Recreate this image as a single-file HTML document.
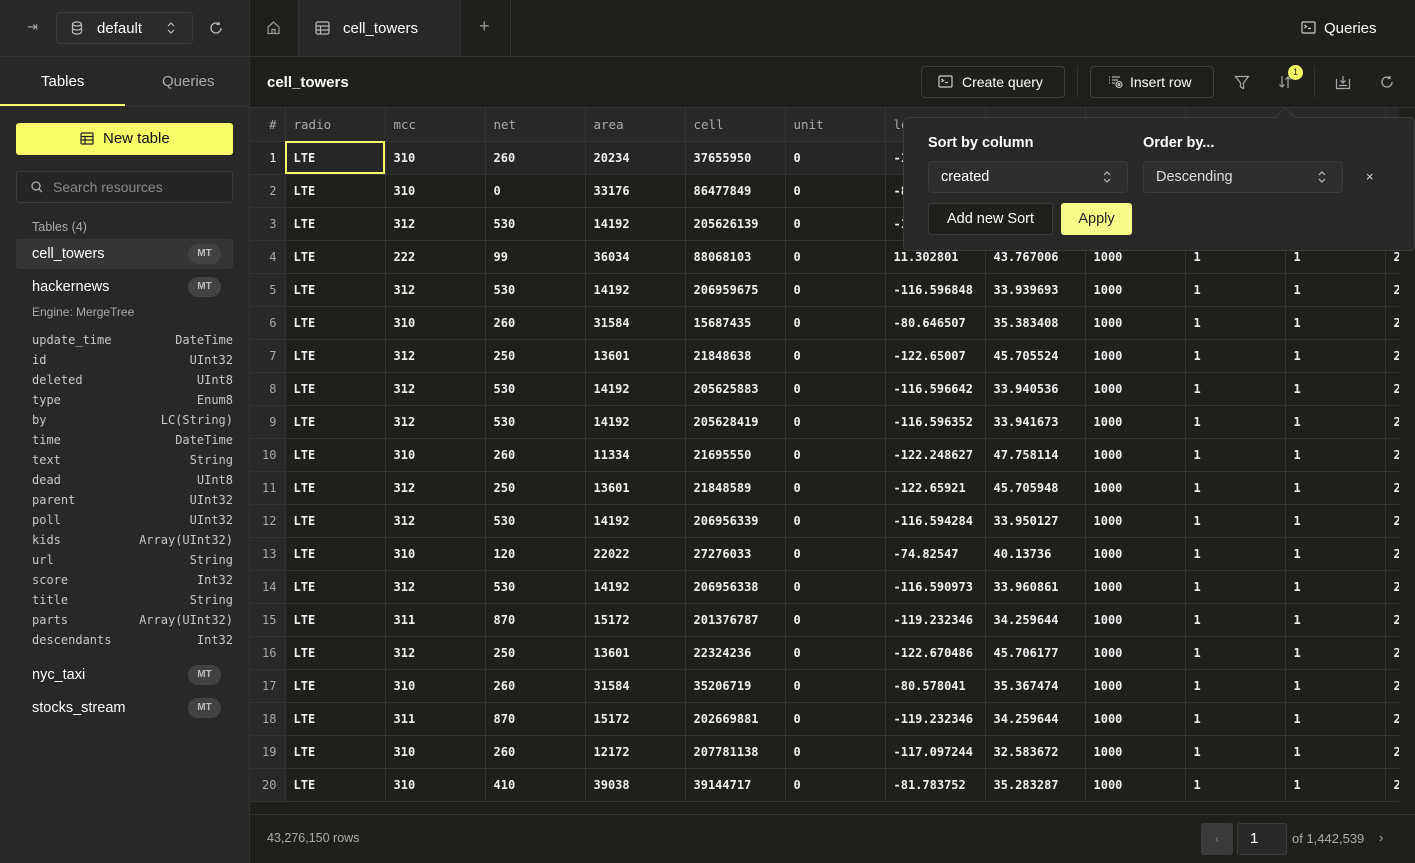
<!DOCTYPE html>
<html><head><meta charset="utf-8"><style>
*{box-sizing:border-box;margin:0;padding:0}
body{width:1415px;height:863px;overflow:hidden;background:#1f1f1c;font-family:"Liberation Sans",sans-serif;color:#fff;position:relative}
.abs{position:absolute}
.sb{left:0;top:0;width:250px;height:863px;background:#282828;border-right:1px solid #333}
.mono{font-family:"DejaVu Sans Mono","Liberation Mono",monospace}
.badge{position:absolute;left:188px;width:33px;height:20px;border-radius:10px;background:#424242;color:#bbb;font-size:10px;text-align:center;line-height:20px;font-weight:bold}
.col{position:absolute;left:32px;width:201px;font-size:12px;color:#c8c8c8;height:20px}
.col span{position:absolute;right:0}
table{position:absolute;left:250px;top:108px;border-collapse:collapse;table-layout:fixed;font-family:"DejaVu Sans Mono",monospace;font-size:12px}
td,th{height:33px;border-right:1px solid #333;border-bottom:1px solid #333;padding-left:8px;text-align:left;white-space:nowrap;overflow:hidden;font-weight:bold;color:#f0f0f0}
th{background:#282828;color:#aaa;font-weight:normal;font-size:12.5px}
td.n{background:#282828;color:#aaa;text-align:right;padding:0 8px 0 0;font-weight:normal;font-size:12px}
tr.s td{background:#262626}
.btn{position:absolute;height:32px;border:1px solid #3e3e3e;border-radius:4px;font-size:14px;line-height:30px;color:#fff}
svg{position:absolute}
</style></head><body>
<div class="abs sb"></div>
<!-- top bar -->
<div class="abs" style="left:0;top:56px;width:1415px;height:1px;background:#333"></div>
<div class="abs" style="left:27px;top:19px;color:#aaa;font-size:13px">⇥</div>
<div class="abs" style="left:56px;top:12px;width:137px;height:32px;border:1px solid #3a3a3a;border-radius:4px;background:#2a2a2a"></div>
<svg style="left:71px;top:21px" width="12" height="14" viewBox="0 0 12 14" fill="none" stroke="#bbb" stroke-width="1.2"><ellipse cx="6" cy="3" rx="4.5" ry="2"/><path d="M1.5 3v8c0 1.1 2 2 4.5 2s4.5-.9 4.5-2V3M1.5 7c0 1.1 2 2 4.5 2s4.5-.9 4.5-2"/></svg>
<div class="abs" style="left:97px;top:20px;font-size:15px">default</div>
<svg style="left:167px;top:21px" width="8" height="14" viewBox="0 0 8 14" fill="none" stroke="#bbb" stroke-width="1.2"><path d="M1 5l3-3 3 3M1 9l3 3 3-3"/></svg>
<svg style="left:209px;top:21px" width="14" height="14" viewBox="0 0 14 14" fill="none" stroke="#bbb" stroke-width="1.3"><path d="M12 7a5 5 0 1 1-2-4M10 1v2.5h-2.5"/></svg>
<div class="abs" style="left:250px;top:0;width:48px;height:56px;background:#1f1f1c"></div>
<svg style="left:266px;top:20px" width="15" height="15" viewBox="0 0 15 15" fill="none" stroke="#999" stroke-width="1.2"><path d="M2 7L7.5 2 13 7v6.5H2z M6 13.5v-4h3v4"/></svg>
<div class="abs" style="left:298px;top:0;width:163px;height:56px;background:#282828;border-left:1px solid #333;border-right:1px solid #333"></div>
<svg style="left:315px;top:21px" width="15" height="14" viewBox="0 0 15 14" fill="none" stroke="#bbb" stroke-width="1.2"><rect x="1" y="1" width="13" height="12" rx="1.5"/><path d="M1 5h13M1 9h13M5.5 5v8"/></svg>
<div class="abs" style="left:343px;top:20px;font-size:15px">cell_towers</div>
<div class="abs" style="left:479px;top:16px;font-size:18px;color:#999">+</div>
<div class="abs" style="left:510px;top:0;width:1px;height:56px;background:#333"></div>
<svg style="left:1301px;top:21px" width="15" height="13" viewBox="0 0 15 13" fill="none" stroke="#ccc" stroke-width="1.2"><rect x="1" y="1" width="13" height="11" rx="1"/><path d="M3.5 4l2 1.5-2 1.5M7 7.5h3"/></svg>
<div class="abs" style="left:1324px;top:20px;font-size:15px">Queries</div>

<!-- sidebar -->
<div class="abs" style="left:41px;top:73px;font-size:15px">Tables</div>
<div class="abs" style="left:162px;top:73px;font-size:15px;color:#aaa">Queries</div>
<div class="abs" style="left:0;top:106px;width:250px;height:1px;background:#333"></div>
<div class="abs" style="left:0;top:104px;width:125px;height:2px;background:#f5fb66"></div>
<div class="abs" style="left:16px;top:123px;width:217px;height:32px;background:#f7fc68;border-radius:3px;color:#111;font-size:15px;line-height:32px;padding-left:87px">New table</div>
<svg style="left:80px;top:132px" width="14" height="13" viewBox="0 0 14 13" fill="none" stroke="#222" stroke-width="1.2"><rect x="1" y="1" width="12" height="11" rx="1"/><path d="M1 4.5h12M1 8h12M5 4.5v7.5"/></svg>
<div class="abs" style="left:16px;top:171px;width:217px;height:32px;border:1px solid #3a3a3a;border-radius:3px;background:#252525"></div>
<svg style="left:31px;top:181px" width="12" height="12" viewBox="0 0 12 12" fill="none" stroke="#aaa" stroke-width="1.3"><circle cx="5" cy="5" r="4"/><path d="M8 8l3 3"/></svg>
<div class="abs" style="left:53px;top:179px;font-size:14px;color:#888">Search resources</div>
<div class="abs" style="left:32px;top:220px;font-size:12.5px;color:#aaa">Tables (4)</div>
<div class="abs" style="left:16px;top:239px;width:217px;height:30px;background:#353535;border-radius:3px"></div>
<div class="abs" style="left:32px;top:246px;font-size:14.5px">cell_towers</div><div class="badge" style="top:244px">MT</div>
<div class="abs" style="left:32px;top:279px;font-size:14.5px">hackernews</div><div class="badge" style="top:277px">MT</div>
<div class="abs" style="left:32px;top:305px;font-size:12px;color:#aaa">Engine: MergeTree</div>
<div class="mono">
<div class="col" style="top:333px">update_time<span>DateTime</span></div>
<div class="col" style="top:353px">id<span>UInt32</span></div>
<div class="col" style="top:373px">deleted<span>UInt8</span></div>
<div class="col" style="top:393px">type<span>Enum8</span></div>
<div class="col" style="top:413px">by<span>LC(String)</span></div>
<div class="col" style="top:433px">time<span>DateTime</span></div>
<div class="col" style="top:453px">text<span>String</span></div>
<div class="col" style="top:473px">dead<span>UInt8</span></div>
<div class="col" style="top:493px">parent<span>UInt32</span></div>
<div class="col" style="top:513px">poll<span>UInt32</span></div>
<div class="col" style="top:533px">kids<span>Array(UInt32)</span></div>
<div class="col" style="top:553px">url<span>String</span></div>
<div class="col" style="top:573px">score<span>Int32</span></div>
<div class="col" style="top:593px">title<span>String</span></div>
<div class="col" style="top:613px">parts<span>Array(UInt32)</span></div>
<div class="col" style="top:633px">descendants<span>Int32</span></div>
</div>
<div class="abs" style="left:32px;top:667px;font-size:14.5px">nyc_taxi</div><div class="badge" style="top:665px">MT</div>
<div class="abs" style="left:32px;top:700px;font-size:14.5px">stocks_stream</div><div class="badge" style="top:698px">MT</div>

<!-- toolbar -->
<div class="abs" style="left:267px;top:74px;font-size:15px;font-weight:bold">cell_towers</div>
<div class="btn" style="left:921px;top:66px;width:144px;padding-left:40px">Create query</div>
<svg style="left:938px;top:75px" width="15" height="13" viewBox="0 0 15 13" fill="none" stroke="#ccc" stroke-width="1.2"><rect x="1" y="1" width="13" height="11" rx="1"/><path d="M3.5 4l2 1.5-2 1.5M7 7.5h3"/></svg>
<div class="abs" style="left:1077px;top:66px;width:1px;height:32px;background:#333"></div>
<div class="btn" style="left:1090px;top:66px;width:124px;padding-left:39px">Insert row</div>
<svg style="left:1108px;top:75px" width="16" height="14" viewBox="0 0 16 14" fill="none" stroke="#ccc" stroke-width="1.1"><path d="M1 2h1M4 2h8M1 5h1M4 5h6M1 8h1M4 8h3"/><circle cx="11" cy="9.5" r="3"/><circle cx="11" cy="9.5" r="1"/></svg>
<svg style="left:1234px;top:75px" width="16" height="15" viewBox="0 0 16 15" fill="none" stroke="#aaa" stroke-width="1.2"><path d="M1.5 1.5h13L9.5 8v5.5l-3-1.5V8z"/></svg>
<svg style="left:1278px;top:74px" width="16" height="16" viewBox="0 0 16 16" fill="none" stroke="#aaa" stroke-width="1.2"><path d="M4 2v11M1.5 10.5L4 13l2.5-2.5M10 14V3M7.5 5.5L10 3l2.5 2.5"/></svg>
<div class="abs" style="left:1288px;top:65px;width:15px;height:15px;border-radius:50%;background:#f5fb66;color:#222;font-size:9px;text-align:center;line-height:15px">1</div>
<div class="abs" style="left:1314px;top:66px;width:1px;height:32px;background:#333"></div>
<svg style="left:1335px;top:74px" width="16" height="16" viewBox="0 0 16 16" fill="none" stroke="#aaa" stroke-width="1.2"><path d="M1.5 5v9.5h13V5M8 2v7M5.5 6.5L8 9l2.5-2.5M4 11.5h8"/></svg>
<svg style="left:1380px;top:75px" width="14" height="14" viewBox="0 0 14 14" fill="none" stroke="#aaa" stroke-width="1.3"><path d="M12 7a5 5 0 1 1-2-4M10 1v2.5h-2.5"/></svg>
<div class="abs" style="left:250px;top:107px;width:1165px;height:1px;background:#333"></div>

<table>
<colgroup><col style="width:35px"><col style="width:100px"><col style="width:100px"><col style="width:100px"><col style="width:100px"><col style="width:100px"><col style="width:100px"><col style="width:100px"><col style="width:100px"><col style="width:100px"><col style="width:100px"><col style="width:100px"><col style="width:14px"></colgroup>
<tr><th style="text-align:right;padding:0 8px 0 0">#</th><th>radio</th><th>mcc</th><th>net</th><th>area</th><th>cell</th><th>unit</th><th>lon</th><th>lat</th><th>range</th><th>samples</th><th>changeable</th><th>c</th></tr>
<tr class="s"><td class="n" style="color:#fff">1</td><td style="outline:2px solid #f5fb66;outline-offset:-2px">LTE</td><td>310</td><td>260</td><td>20234</td><td>37655950</td><td>0</td><td>-122.39</td><td>37.79</td><td>1000</td><td>1</td><td>1</td><td>2</td></tr>
<tr><td class="n">2</td><td>LTE</td><td>310</td><td>0</td><td>33176</td><td>86477849</td><td>0</td><td>-81.56</td><td>28.52</td><td>1000</td><td>1</td><td>1</td><td>2</td></tr>
<tr><td class="n">3</td><td>LTE</td><td>312</td><td>530</td><td>14192</td><td>205626139</td><td>0</td><td>-116.59</td><td>33.94</td><td>1000</td><td>1</td><td>1</td><td>2</td></tr>
<tr><td class="n">4</td><td>LTE</td><td>222</td><td>99</td><td>36034</td><td>88068103</td><td>0</td><td>11.302801</td><td>43.767006</td><td>1000</td><td>1</td><td>1</td><td>2</td></tr>
<tr><td class="n">5</td><td>LTE</td><td>312</td><td>530</td><td>14192</td><td>206959675</td><td>0</td><td>-116.596848</td><td>33.939693</td><td>1000</td><td>1</td><td>1</td><td>2</td></tr>
<tr><td class="n">6</td><td>LTE</td><td>310</td><td>260</td><td>31584</td><td>15687435</td><td>0</td><td>-80.646507</td><td>35.383408</td><td>1000</td><td>1</td><td>1</td><td>2</td></tr>
<tr><td class="n">7</td><td>LTE</td><td>312</td><td>250</td><td>13601</td><td>21848638</td><td>0</td><td>-122.65007</td><td>45.705524</td><td>1000</td><td>1</td><td>1</td><td>2</td></tr>
<tr><td class="n">8</td><td>LTE</td><td>312</td><td>530</td><td>14192</td><td>205625883</td><td>0</td><td>-116.596642</td><td>33.940536</td><td>1000</td><td>1</td><td>1</td><td>2</td></tr>
<tr><td class="n">9</td><td>LTE</td><td>312</td><td>530</td><td>14192</td><td>205628419</td><td>0</td><td>-116.596352</td><td>33.941673</td><td>1000</td><td>1</td><td>1</td><td>2</td></tr>
<tr><td class="n">10</td><td>LTE</td><td>310</td><td>260</td><td>11334</td><td>21695550</td><td>0</td><td>-122.248627</td><td>47.758114</td><td>1000</td><td>1</td><td>1</td><td>2</td></tr>
<tr><td class="n">11</td><td>LTE</td><td>312</td><td>250</td><td>13601</td><td>21848589</td><td>0</td><td>-122.65921</td><td>45.705948</td><td>1000</td><td>1</td><td>1</td><td>2</td></tr>
<tr><td class="n">12</td><td>LTE</td><td>312</td><td>530</td><td>14192</td><td>206956339</td><td>0</td><td>-116.594284</td><td>33.950127</td><td>1000</td><td>1</td><td>1</td><td>2</td></tr>
<tr><td class="n">13</td><td>LTE</td><td>310</td><td>120</td><td>22022</td><td>27276033</td><td>0</td><td>-74.82547</td><td>40.13736</td><td>1000</td><td>1</td><td>1</td><td>2</td></tr>
<tr><td class="n">14</td><td>LTE</td><td>312</td><td>530</td><td>14192</td><td>206956338</td><td>0</td><td>-116.590973</td><td>33.960861</td><td>1000</td><td>1</td><td>1</td><td>2</td></tr>
<tr><td class="n">15</td><td>LTE</td><td>311</td><td>870</td><td>15172</td><td>201376787</td><td>0</td><td>-119.232346</td><td>34.259644</td><td>1000</td><td>1</td><td>1</td><td>2</td></tr>
<tr><td class="n">16</td><td>LTE</td><td>312</td><td>250</td><td>13601</td><td>22324236</td><td>0</td><td>-122.670486</td><td>45.706177</td><td>1000</td><td>1</td><td>1</td><td>2</td></tr>
<tr><td class="n">17</td><td>LTE</td><td>310</td><td>260</td><td>31584</td><td>35206719</td><td>0</td><td>-80.578041</td><td>35.367474</td><td>1000</td><td>1</td><td>1</td><td>2</td></tr>
<tr><td class="n">18</td><td>LTE</td><td>311</td><td>870</td><td>15172</td><td>202669881</td><td>0</td><td>-119.232346</td><td>34.259644</td><td>1000</td><td>1</td><td>1</td><td>2</td></tr>
<tr><td class="n">19</td><td>LTE</td><td>310</td><td>260</td><td>12172</td><td>207781138</td><td>0</td><td>-117.097244</td><td>32.583672</td><td>1000</td><td>1</td><td>1</td><td>2</td></tr>
<tr><td class="n">20</td><td>LTE</td><td>310</td><td>410</td><td>39038</td><td>39144717</td><td>0</td><td>-81.783752</td><td>35.283287</td><td>1000</td><td>1</td><td>1</td><td>2</td></tr>
</table>
<div class="abs" style="left:1399px;top:108px;width:16px;height:700px;background:#1f1f1c"></div>

<!-- footer -->
<div class="abs" style="left:250px;top:814px;width:1165px;height:1px;background:#333"></div>
<div class="abs" style="left:267px;top:831px;font-size:12.5px;color:#aaa">43,276,150 rows</div>
<div class="abs" style="left:1201px;top:823px;width:32px;height:32px;background:#3a3a3a;border-radius:3px;color:#777;text-align:center;line-height:32px;font-size:12px">‹</div>
<div class="abs" style="left:1237px;top:823px;width:50px;height:32px;background:#282828;border:1px solid #3a3a3a;border-radius:3px;font-size:15px;line-height:30px;padding-left:12px">1</div>
<div class="abs" style="left:1292px;top:831px;font-size:13px;color:#aaa">of 1,442,539</div>
<div class="abs" style="left:1379px;top:830px;font-size:13px;color:#aaa">›</div>

<!-- popover -->
<div class="abs" style="left:903px;top:117px;width:512px;height:134px;background:#282828;border:1px solid #3c3c3c;border-radius:5px"></div>
<div class="abs" style="left:1278px;top:110px;width:14px;height:14px;background:#282828;border-left:1px solid #3c3c3c;border-top:1px solid #3c3c3c;transform:rotate(45deg)"></div>
<div class="abs" style="left:928px;top:135px;font-size:14.5px;font-weight:bold">Sort by column</div>
<div class="abs" style="left:1143px;top:135px;font-size:14.5px;font-weight:bold">Order by...</div>
<div class="abs" style="left:928px;top:161px;width:200px;height:32px;background:#2e2e2e;border:1px solid #3a3a3a;border-radius:4px;font-size:14.5px;line-height:30px;padding-left:12px">created</div>
<svg style="left:1103px;top:170px" width="8" height="14" viewBox="0 0 8 14" fill="none" stroke="#bbb" stroke-width="1.2"><path d="M1 5l3-3 3 3M1 9l3 3 3-3"/></svg>
<div class="abs" style="left:1143px;top:161px;width:200px;height:32px;background:#2e2e2e;border:1px solid #3a3a3a;border-radius:4px;font-size:14.5px;line-height:30px;padding-left:12px;color:#ddd">Descending</div>
<svg style="left:1318px;top:170px" width="8" height="14" viewBox="0 0 8 14" fill="none" stroke="#bbb" stroke-width="1.2"><path d="M1 5l3-3 3 3M1 9l3 3 3-3"/></svg>
<div class="abs" style="left:1366px;top:169px;font-size:13px;color:#ddd">×</div>
<div class="abs" style="left:928px;top:203px;width:125px;height:32px;background:#1f1f1c;border:1px solid #3a3a3a;border-radius:3px;font-size:14.5px;line-height:30px;text-align:center">Add new Sort</div>
<div class="abs" style="left:1061px;top:203px;width:71px;height:32px;background:#f7fc88;border-radius:3px;font-size:14.5px;line-height:32px;text-align:center;color:#222">Apply</div>
</body></html>
